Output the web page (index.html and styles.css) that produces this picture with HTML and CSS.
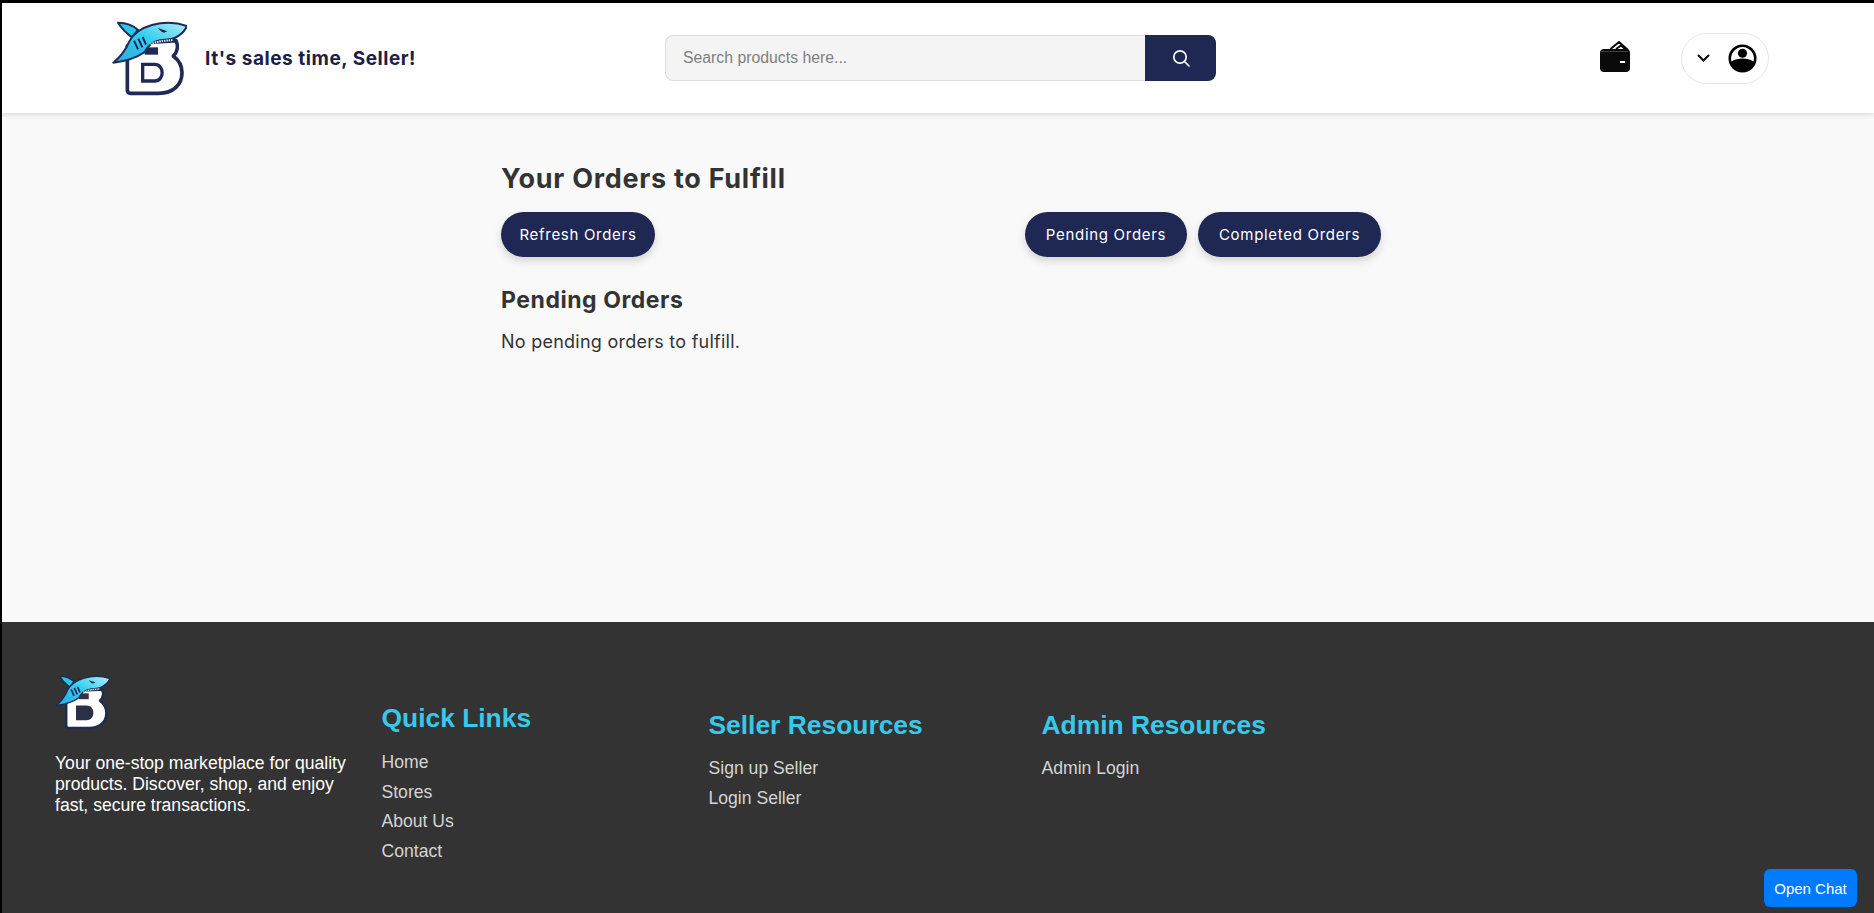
FILE: index.html
```html
<!DOCTYPE html>
<html lang="en">
<head>
<meta charset="utf-8">
<title>Orders to Fulfill</title>
<link rel="stylesheet" href="styles.css">
</head>
<body>
<header class="top">
  <div class="brand">
    <svg class="logo" viewBox="20 25 225 225" aria-hidden="true">
      <defs><linearGradient id="sk" x1="0" y1="1" x2="1" y2="0"><stop offset="0" stop-color="#2aa7e0"/><stop offset=".55" stop-color="#35d0ee"/><stop offset="1" stop-color="#b5eef8"/></linearGradient></defs>
      <path d="M66 100V232Q66 242 76 242H160C205 242 230 215 230 180C230 158 220 142 204 130C216 118 220 100 212 84L120 90Z" fill="#fff" stroke="#1f2a56" stroke-width="11" stroke-linejoin="round"/>
      <path d="M112 155H148C178 155 178 205 148 205H112Z" fill="#fff" stroke="#1f2a56" stroke-width="10"/>
      <path d="M118 104H158V126H118Z" fill="#1f2a56"/>
      <path d="M38 30C62 30 84 38 98 52L80 74C64 62 48 46 38 30Z" fill="#2ec3e8" stroke="#1f2a56" stroke-width="6" stroke-linejoin="round"/>
      <path d="M245 40C212 28 172 28 140 37C108 46 84 62 72 86C62 110 46 132 24 150C58 146 96 134 118 118C126 102 136 92 152 86C172 78 192 84 208 76C226 68 238 56 245 40Z" fill="url(#sk)" stroke="#1f2a56" stroke-width="6" stroke-linejoin="round"/>
      <path d="M86 84L98 110M99 78L111 104M112 73L122 96" stroke="#1f2a56" stroke-width="6" fill="none"/>
      <path d="M158 46L186 56L176 60C168 58 162 52 158 46Z" fill="#1f2a56"/>
      <path d="M136 96C150 86 180 84 204 82" stroke="#fff" stroke-width="6" stroke-dasharray="4 3" fill="none"/>
    </svg>
    <span class="greeting">It's sales time, Seller!</span>
  </div>
  <form class="search">
    <input class="search-input" type="text" placeholder="Search products here...">
    <button class="search-btn" type="button" aria-label="Search">
      <svg class="search-icon" viewBox="0 0 18 18"><circle cx="8" cy="8" r="6.2"/><path d="M12.5 12.5L17 17"/></svg>
    </button>
  </form>
  <div class="actions">
    <svg class="wallet" viewBox="0 0 30 31" aria-hidden="true">
      <rect x="0" y="8" width="30" height="23" rx="4"/>
      <path class="wallet-gap" d="M1.500 10.500H28"/>
      <path class="wallet-paper" d="M10.500 8L19 1L28 9M16 8L21 4.500L25 8"/>
      <rect class="wallet-slot" x="20" y="20" width="5" height="2"/>
    </svg>
    <div class="account">
      <svg class="chevron" viewBox="0 0 13 8"><path d="M1 1L6.500 6.500L12 1"/></svg>
      <svg class="avatar" viewBox="0 0 30 30" aria-hidden="true">
        <circle cx="15" cy="15" r="14.500"/>
        <path class="avatar-face" d="M3.600 18A11.800 11.800 0 1 1 26.400 18C23 15.800 19 15 15 15C11 15 7 15.800 3.600 18Z"/>
        <circle cx="15" cy="9.500" r="4.700"/>
      </svg>
    </div>
  </div>
</header>

<main class="content">
  <div class="panel">
    <h1 class="title">Your Orders to Fulfill</h1>
    <div class="toolbar">
      <button class="pill" type="button">Refresh Orders</button>
      <div class="tabs">
        <button class="pill pill-pending" type="button">Pending Orders</button>
        <button class="pill pill-completed" type="button">Completed Orders</button>
      </div>
    </div>
    <h2 class="subtitle">Pending Orders</h2>
    <p class="empty">No pending orders to fulfill.</p>
  </div>
</main>

<footer class="foot">
  <div class="col col-about">
    <svg class="foot-logo" viewBox="20 25 225 225" aria-hidden="true">
      <defs><linearGradient id="sk2" x1="0" y1="1" x2="1" y2="0"><stop offset="0" stop-color="#2aa7e0"/><stop offset=".55" stop-color="#35d0ee"/><stop offset="1" stop-color="#b5eef8"/></linearGradient></defs>
      <path d="M66 100V232Q66 242 76 242H160C205 242 230 215 230 180C230 158 220 142 204 130C216 118 220 100 212 84L120 90Z" fill="#fff" stroke="#1f2a56" stroke-width="10" stroke-linejoin="round"/>
      <path d="M106 150H150C186 150 186 210 150 210H106Z" fill="#2b2f48"/>
      <path d="M118 100H158V124H118Z" fill="#33353f"/>
      <path d="M38 30C62 30 84 38 98 52L80 74C64 62 48 46 38 30Z" fill="#2ec3e8" stroke="#1f2a56" stroke-width="6" stroke-linejoin="round"/>
      <path d="M245 40C212 28 172 28 140 37C108 46 84 62 72 86C62 110 46 132 24 150C58 146 96 134 118 118C126 102 136 92 152 86C172 78 192 84 208 76C226 68 238 56 245 40Z" fill="url(#sk2)" stroke="#1f2a56" stroke-width="6" stroke-linejoin="round"/>
      <path d="M86 84L98 110M99 78L111 104M112 73L122 96" stroke="#1f2a56" stroke-width="7" fill="none"/>
      <path d="M158 46L186 56L176 60C168 58 162 52 158 46Z" fill="#1f2a56"/>
      <path d="M136 96C150 86 180 84 204 82" stroke="#fff" stroke-width="6" stroke-dasharray="4 3" fill="none"/>
    </svg>
    <p class="about">Your one-stop marketplace for quality products. Discover, shop, and enjoy fast, secure transactions.</p>
  </div>
  <nav class="col col-quick">
    <h3 class="col-title">Quick Links</h3>
    <a class="link" href="#">Home</a>
    <a class="link" href="#">Stores</a>
    <a class="link" href="#">About Us</a>
    <a class="link" href="#">Contact</a>
  </nav>
  <nav class="col col-seller">
    <h3 class="col-title">Seller Resources</h3>
    <a class="link" href="#">Sign up Seller</a>
    <a class="link" href="#">Login Seller</a>
  </nav>
  <nav class="col col-admin">
    <h3 class="col-title">Admin Resources</h3>
    <a class="link" href="#">Admin Login</a>
  </nav>
</footer>
<button class="chat" type="button">Open Chat</button>
</body>
</html>
```

FILE: styles.css
```css
* { box-sizing: border-box; }
html, body { height: 100%; }
body {
  margin: 0;
  height: 913px;
  overflow: hidden;
  display: flex;
  flex-direction: column;
  border-top: 3px solid #000;
  border-left: 2px solid #000;
  background: #f9f9f9;
  font-family: "Liberation Sans", Arial, sans-serif;
}

/* Header */
.top {
  flex: 0 0 110px;
  display: flex;
  align-items: center;
  padding: 0 105px 0 110px;
  background: #fff;
  box-shadow: 0 2px 5px rgba(0, 0, 0, .12);
  position: relative;
}
.brand { flex: 0 0 553px; display: flex; align-items: center; gap: 18px; }
.logo { width: 75px; height: 75px; display: block; }
.greeting {
  font-family: Inter, "Open Sans", sans-serif;
  font-weight: 700;
  font-size: 19px;
  letter-spacing: .55px;
  color: #1b2048;
}
.search { flex: 0 0 551px; height: 46px; display: flex; }
.search-input {
  flex: 1;
  min-width: 0;
  height: 46px;
  padding: 0 17px;
  border: 1px solid #ddd;
  border-right: 0;
  border-radius: 8px 0 0 8px;
  background: #f4f4f4;
  font: 15.800px "Liberation Sans", Arial, sans-serif;
  outline: 0;
}
.search-input::placeholder { color: #808080; opacity: 1; }
.search-btn {
  flex: 0 0 71px;
  height: 46px;
  padding: 0;
  border: 0;
  border-radius: 0 8px 8px 0;
  background: #1f2753;
  display: flex;
  align-items: center;
  justify-content: center;
}
.search-icon { width: 18px; height: 18px; fill: none; stroke: #fff; stroke-width: 1.700; stroke-linecap: round; }
.actions { margin-left: auto; display: flex; align-items: center; gap: 51px; }
.wallet { width: 30px; height: 31px; display: block; margin-top: -3px; fill: #0a0a0a; }
.wallet-paper { fill: none; stroke: #0a0a0a; stroke-width: 2; stroke-linejoin: round; }
.wallet-gap { fill: none; stroke: #4a4a4a; stroke-width: .800; }
.wallet-slot { fill: #fff; }
.account {
  width: 88px;
  height: 51px;
  display: flex;
  align-items: center;
  gap: 18px;
  padding-left: 15px;
  border: 1px solid #e6e6e6;
  border-radius: 26px;
  background: #fff;
}
.chevron { width: 13px; height: 8px; fill: none; stroke: #0a0a0a; stroke-width: 2; }
.avatar { width: 29px; height: 29px; fill: #000; }
.avatar-face { fill: #fff; }

/* Main */
.content { flex: 1; padding-top: 48px; }
.panel { width: 880px; margin-left: 499px; font-family: Inter, "Open Sans", sans-serif; color: #333; }
.title { margin: 0 0 15px; font-size: 27px; line-height: 36px; font-weight: 700; letter-spacing: .72px; }
.toolbar { display: flex; justify-content: space-between; }
.tabs { display: flex; gap: 11px; }
.pill {
  height: 45px;
  padding: 0;
  width: 154px;
  border: 0;
  border-radius: 23px;
  background: #1f2753;
  color: #fff;
  font: 400 15px Inter, "Open Sans", sans-serif;
  letter-spacing: .7px;
  box-shadow: 0 4px 8px rgba(0, 0, 0, .15);
}
.pill-pending { width: 162px; }
.pill-completed { width: 183px; }
.subtitle { margin: 29px 0 0; font-size: 23px; line-height: 28px; font-weight: 700; letter-spacing: .55px; }
.empty { margin: 16px 0 0; font-size: 18px; line-height: 24px; font-weight: 400; letter-spacing: .25px; }

/* Footer */
.foot {
  flex: 0 0 291px;
  display: flex;
  align-items: flex-start;
  padding: 53px 0 0 53px;
  background: #333;
  color: #ddd;
}
.col { display: flex; flex-direction: column; align-items: flex-start; }
.col-about { flex: 0 0 326.500px; }
.col-quick { flex: 0 0 327px; padding-top: 28px; }
.col-quick .col-title { margin-bottom: 15px; }
.col-seller { flex: 0 0 333px; padding-top: 35px; }
.col-admin { padding-top: 35px; }
.foot-logo { width: 55px; height: 55px; display: block; }
.about { width: 300px; margin: 23px 0 0; font-size: 17.600px; line-height: 21px; color: #fff; }
.col-title { margin: 0 0 14px; font-size: 26.400px; line-height: 30px; font-weight: 700; color: #38c8ea; }
.link { display: block; font-size: 17.600px; line-height: 29.600px; color: #d4d4d4; text-decoration: none; }

.chat {
  position: fixed;
  right: 17px;
  bottom: 6px;
  width: 93px;
  height: 38px;
  padding: 0;
  border: 0;
  border-radius: 6px;
  background: #007bff;
  color: #fff;
  font: 15px "Liberation Sans", Arial, sans-serif;
}
```
